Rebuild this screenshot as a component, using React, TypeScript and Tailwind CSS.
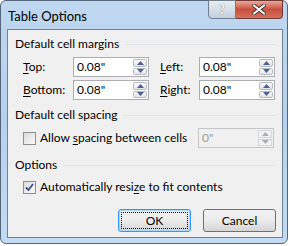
import * as React from "react";

function Arrow({ up, disabled }: { up?: boolean; disabled?: boolean }) {
  return (
    <svg width="7" height="4" viewBox="0 0 7 4">
      <path
        d={up ? "M0 4 L3.5 0 L7 4 Z" : "M0 0 L3.5 4 L7 0 Z"}
        fill={disabled ? "#a8adb5" : "#4a6196"}
      />
    </svg>
  );
}

function Spinner({ disabled }: { disabled?: boolean }) {
  const btn = disabled
    ? "flex flex-1 items-center justify-center border border-[#d6d8db] bg-[#f2f2f2]"
    : "flex flex-1 items-center justify-center rounded-[2px] border border-[#b8bcc2] bg-gradient-to-b from-[#fafafa] to-[#e2e4e7]";
  return (
    <div className="flex w-[16px] flex-col gap-px p-px">
      <div className={btn}>
        <Arrow up disabled={disabled} />
      </div>
      <div className={btn}>
        <Arrow disabled={disabled} />
      </div>
    </div>
  );
}

function Field({ value, disabled }: { value: string; disabled?: boolean }) {
  return (
    <div
      className={[
        "flex h-[20px] w-[76px] border",
        disabled ? "border-[#c4c6c9] bg-[#f0f0f0] text-[#9a9a9a]" : "border-[#abadb3] bg-white text-black",
      ].join(" ")}
    >
      <span className="flex-1 pl-[3px] leading-[18px]">{value}</span>
      <Spinner disabled={disabled} />
    </div>
  );
}

function Header({ label }: { label: string }) {
  return (
    <div className="flex h-[16px] items-center gap-[6px] pr-[6px]">
      <span className="leading-[16px]">{label}</span>
      <div className="flex-1 border-t border-[#dde4ea]" />
    </div>
  );
}

function Checkbox({ checked }: { checked?: boolean }) {
  return (
    <div className="flex h-[13px] w-[13px] items-center justify-center border border-[#8e8f8f] bg-gradient-to-br from-[#dcdcdc] to-[#fafafa]">
      {checked && (
        <svg width="9" height="9" viewBox="0 0 9 9">
          <path d="M1 4.5 L3.5 7 L8 1" stroke="#3a4f8c" strokeWidth="1.8" fill="none" />
        </svg>
      )}
    </div>
  );
}

function Label({ text, u, className = "" }: { text: string; u: number; className?: string }) {
  return (
    <span className={className}>
      {text.slice(0, u)}
      <span className="underline underline-offset-2">{text[u]}</span>
      {text.slice(u + 1)}
    </span>
  );
}

export default function App() {
  return (
    <div className="h-[246px] w-[290px] bg-white font-['Lato',sans-serif] text-[12px] text-black">
      <div className="flex h-[244px] w-[288px] flex-col rounded-[6px] border border-[#55667a] bg-gradient-to-b from-[#bfd7f0] via-[#b6d1ed] to-[#c3dbf3] pb-[5px] pl-[6px] pr-[4px]">
        {/* title bar */}
        <div className="flex h-[28px] items-start justify-between">
          <span className="pl-[1px] pt-[6px] text-[13px] leading-[18px]">Table Options</span>
          <div className="-mt-px flex">
            <div className="flex h-[19px] w-[28px] items-center justify-center rounded-bl-[4px] border border-[#6f7d8d] bg-gradient-to-b from-[#e8eef5] to-[#c4d0de] text-[13px] font-bold leading-none text-white [text-shadow:0_0_1px_#444]">
              ?
            </div>
            <div className="flex h-[19px] w-[47px] items-center justify-center rounded-br-[4px] border border-l-0 border-[#6f3a36] bg-gradient-to-b from-[#e9a99c] via-[#c94f3e] to-[#d3705e]">
              <svg width="14" height="11" viewBox="0 0 14 11">
                <path d="M2 1.5 L12 9.5 M12 1.5 L2 9.5" stroke="#3b2a28" strokeWidth="3.6" strokeLinecap="round" />
                <path d="M2 1.5 L12 9.5 M12 1.5 L2 9.5" stroke="#ffffff" strokeWidth="2.2" strokeLinecap="round" />
              </svg>
            </div>
          </div>
        </div>

        {/* client area */}
        <div className="flex flex-1 flex-col border border-[#6f8296] bg-[#f0f0f0] pl-[7px] pt-[6px]">
          <Header label="Default cell margins" />
          <div className="mt-[5px] grid grid-cols-[50px_76px_50px_76px] gap-y-[3px] pl-[8px]">
            <Label text="Top:" u={0} className="leading-[20px]" />
            <Field value={'0.08"'} />
            <Label text="Left:" u={0} className="pl-[11px] leading-[20px]" />
            <Field value={'0.08"'} />
            <Label text="Bottom:" u={0} className="leading-[20px]" />
            <Field value={'0.08"'} />
            <Label text="Right:" u={0} className="pl-[11px] leading-[20px]" />
            <Field value={'0.08"'} />
          </div>

          <div className="mt-[7px]">
            <Header label="Default cell spacing" />
          </div>
          <div className="mt-[5px] flex items-center pl-[8px]">
            <Checkbox />
            <Label text="Allow spacing between cells" u={6} className="pl-[4px]" />
            <div className="ml-auto mr-[8px]">
              <Field value={'0"'} disabled />
            </div>
          </div>

          <div className="mt-[9px]">
            <Header label="Options" />
          </div>
          <div className="mt-[5px] flex items-center pl-[8px]">
            <Checkbox checked />
            <Label text="Automatically resize to fit contents" u={18} className="pl-[4px]" />
          </div>

          <div className="mt-auto mb-[5px] flex justify-end gap-[12px] pr-[6px]">
            <div className="flex h-[23px] w-[73px] items-center justify-center rounded-[3px] border border-[#3399ff] bg-gradient-to-b from-[#f2f2f2] via-[#ebebeb] to-[#d5d5d5] p-[2px] shadow-[inset_0_0_0_1px_#a7d6f8]">
              <div className="flex h-full w-full items-center justify-center border border-dotted border-black">OK</div>
            </div>
            <div className="flex h-[23px] w-[73px] items-center justify-center rounded-[3px] border border-[#707070] bg-gradient-to-b from-[#f2f2f2] via-[#ebebeb] to-[#d5d5d5]">
              Cancel
            </div>
          </div>
        </div>
      </div>
    </div>
  );
}
